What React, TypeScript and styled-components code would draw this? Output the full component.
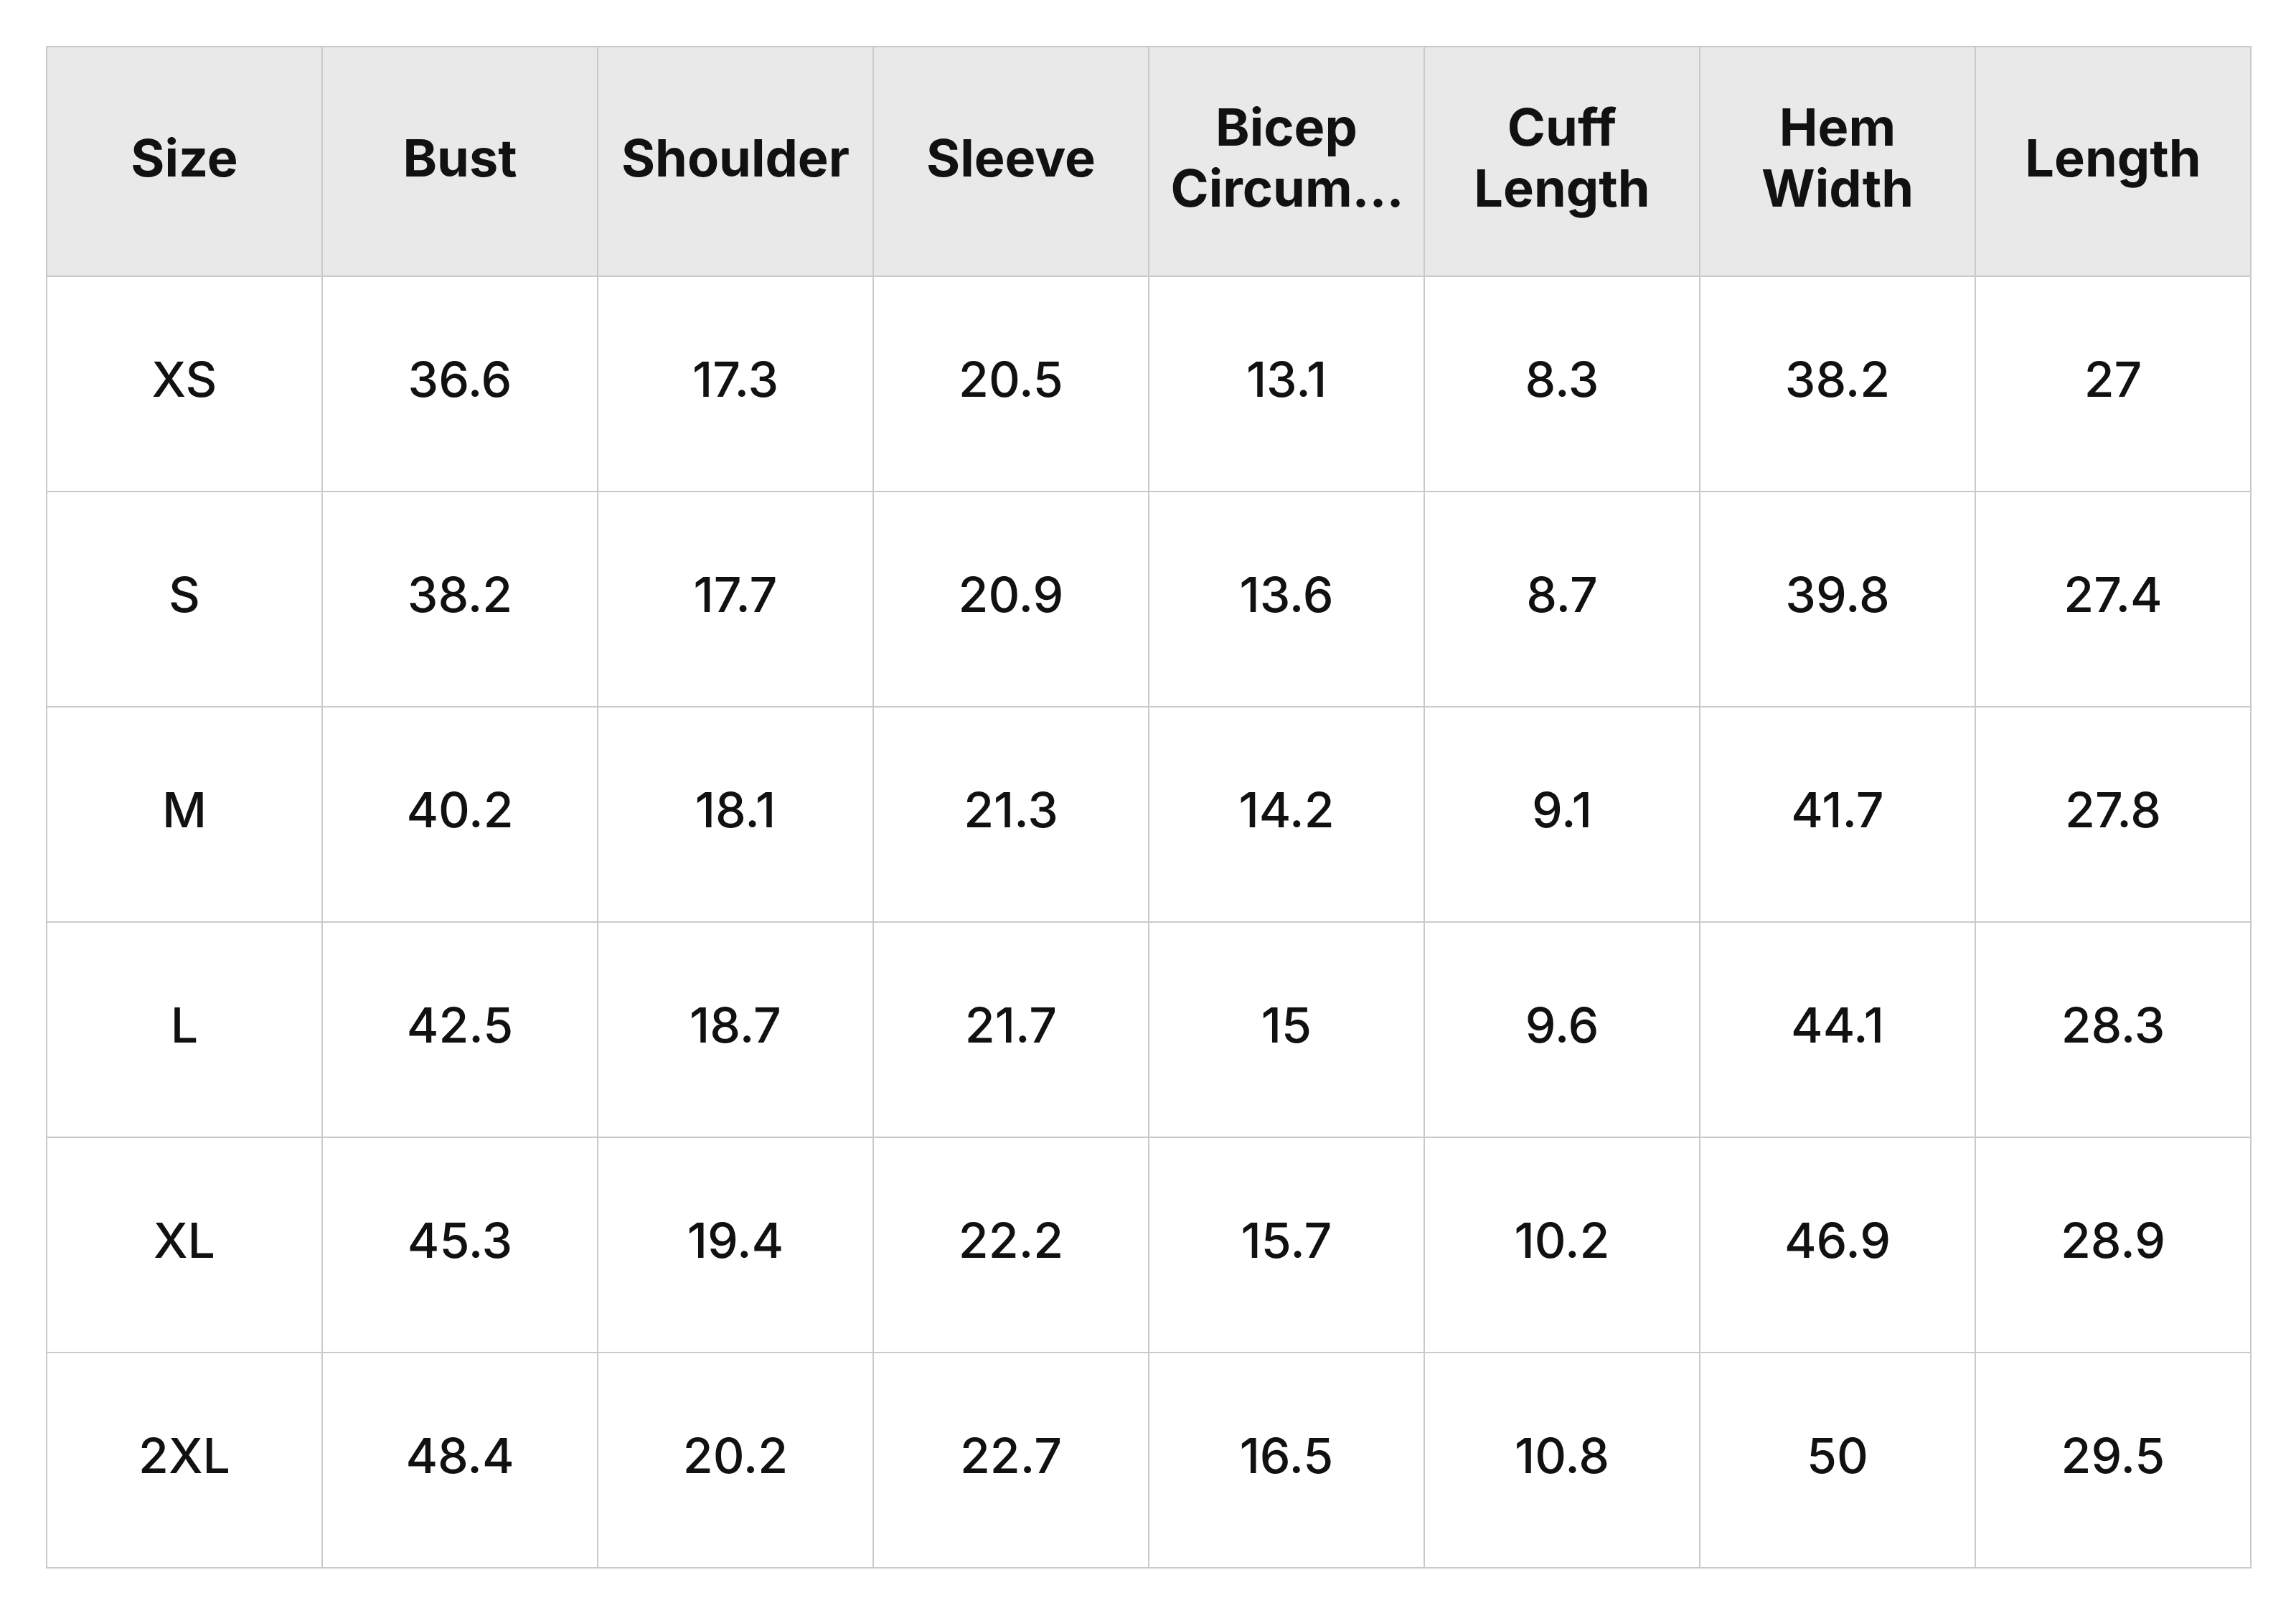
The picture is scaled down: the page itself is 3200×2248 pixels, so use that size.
import React from "react";
import styled, { createGlobalStyle } from "styled-components";

const GlobalStyle = createGlobalStyle`
  html, body {
    margin: 0;
    padding: 0;
    background: #ffffff;
  }
  body {
    font-family: Inter, "Noto Sans", "Liberation Sans", sans-serif;
    color: #111111;
  }
`;

const Page = styled.div`
  padding: 64px;
  background: #ffffff;
`;

const Table = styled.div`
  display: grid;
  grid-template-columns: repeat(8, 384px);
  grid-template-rows: 320px repeat(6, 300px);
  width: max-content;
  border-top: 2px solid #cacaca;
  border-left: 2px solid #cacaca;
`;

const Cell = styled.div<{ $head?: boolean }>`
  box-sizing: border-box;
  display: flex;
  align-items: center;
  justify-content: center;
  padding: 0 24px 12px;
  border-right: 2px solid #cacaca;
  border-bottom: 2px solid #cacaca;
  background: ${(p) => (p.$head ? "#e9e9e9" : "#ffffff")};
  color: #111111;
  text-align: center;
  font-size: ${(p) => (p.$head ? "72px" : "68px")};
  font-weight: ${(p) => (p.$head ? 700 : 500)};
  line-height: ${(p) => (p.$head ? "85px" : "1.2")};
  min-width: 0;
`;

const Clamp = styled.span`
  display: -webkit-box;
  -webkit-box-orient: vertical;
  -webkit-line-clamp: 2;
  overflow: hidden;
  overflow-wrap: anywhere;
  max-width: 100%;
`;

const headers = [
  "Size",
  "Bust",
  "Shoulder",
  "Sleeve",
  "Bicep Circumference",
  "Cuff Length",
  "Hem Width",
  "Length",
];

const rows: string[][] = [
  ["XS", "36.6", "17.3", "20.5", "13.1", "8.3", "38.2", "27"],
  ["S", "38.2", "17.7", "20.9", "13.6", "8.7", "39.8", "27.4"],
  ["M", "40.2", "18.1", "21.3", "14.2", "9.1", "41.7", "27.8"],
  ["L", "42.5", "18.7", "21.7", "15", "9.6", "44.1", "28.3"],
  ["XL", "45.3", "19.4", "22.2", "15.7", "10.2", "46.9", "28.9"],
  ["2XL", "48.4", "20.2", "22.7", "16.5", "10.8", "50", "29.5"],
];

export default function App() {
  return (
    <>
      <GlobalStyle />
      <Page>
        <Table>
          {headers.map((h) => (
            <Cell key={h} $head>
              <Clamp>{h}</Clamp>
            </Cell>
          ))}
          {rows.map((r) =>
            r.map((v, i) => <Cell key={r[0] + i}>{v}</Cell>)
          )}
        </Table>
      </Page>
    </>
  );
}
